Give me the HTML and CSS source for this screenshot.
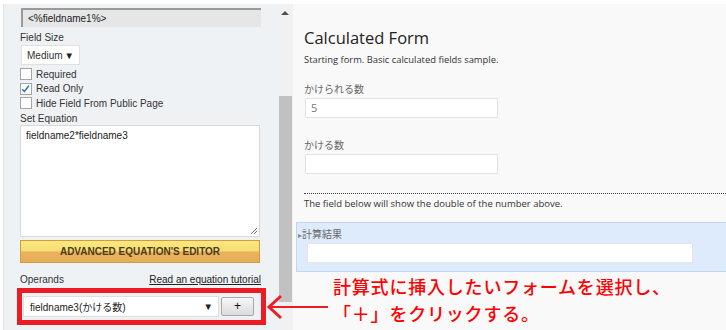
FILE: index.html
```html
<!DOCTYPE html>
<html lang="ja">
<head>
  <meta charset="UTF-8">
  <title>Calculated Form</title>
  <link rel="stylesheet" href="styles.css">
</head>
<body>
  <div class="page">
    <div class="sidebar">
      <div class="default-value">&lt;%fieldname1%&gt;</div>

      <div class="label">Field Size</div>
      <div class="size-select"><span>Medium</span><span class="caret">&#9660;</span></div>

      <div class="checks">
        <div class="check"><span class="box"></span>Required</div>
        <div class="check">
          <span class="box">
            <svg width="12" height="12" viewBox="0 0 12 12"><path d="M2.5 6.2 L4.8 8.8 L9.8 2.2" fill="none" stroke="#2b7cc4" stroke-width="1.6"/></svg>
          </span>Read Only
        </div>
        <div class="check"><span class="box"></span>Hide Field From Public Page</div>
      </div>

      <div class="label eq-label">Set Equation</div>
      <div class="equation">
        fieldname2*fieldname3
        <svg class="grip" width="8" height="8" viewBox="0 0 8 8"><path d="M7 1 L1 7 M7 4 L4 7" stroke="#777" stroke-width="1"/></svg>
      </div>

      <div class="btn-editor">ADVANCED EQUATION'S EDITOR</div>

      <div class="operands">
        <span>Operands</span>
        <a href="#" class="tutorial">Read an equation tutorial</a>
      </div>

      <div class="highlight">
        <div class="operand-select"><span>fieldname3(かける数)</span><span class="caret">&#9660;</span></div>
        <div class="btn-plus">+</div>
      </div>
    </div>

    <div class="scrollbar">
      <div class="scroll-up"></div>
      <div class="scroll-thumb"></div>
    </div>

    <div class="main">
      <h1 class="form-title">Calculated Form</h1>
      <p class="form-desc">Starting form. Basic calculated fields sample.</p>

      <div class="field">
        <div class="field-label">かけられる数</div>
        <div class="field-input">5</div>
      </div>

      <div class="field">
        <div class="field-label">かける数</div>
        <div class="field-input"></div>
      </div>

      <div class="separator"></div>
      <p class="note">The field below will show the double of the number above.</p>

      <div class="result-box">
        <div class="result-label"><span class="tri">&#9656;</span>計算結果</div>
        <div class="result-input"></div>
      </div>
    </div>

    <svg class="arrow" width="64" height="26" viewBox="0 0 64 26">
      <path d="M2 13 L62 13" stroke="#ee1c24" stroke-width="2.2"/>
      <path d="M15 2 L3 13 L15 24" fill="none" stroke="#ee1c24" stroke-width="3"/>
    </svg>
    <div class="annotation">計算式に挿入したいフォームを選択し、<br>「＋」をクリックする。</div>
  </div>
</body>
</html>
```

FILE: styles.css
```css
body {
  margin: 0;
  background-color: #fff;
  font-family: "Liberation Sans", Arial, sans-serif;
}

.page {
  position: relative;
  display: flex;
  width: 726px;
  height: 326px;
  padding-top: 4px;
  overflow: hidden;
}

/* left settings panel */
.sidebar {
  width: 241px;
  margin-left: 3px;
  padding: 4px 16px 0 16px;
  border-left: 1px solid #dfe4ea;
  background-color: #eff2f5;
  font-size: 10px;
  color: #333;
}

.default-value {
  box-sizing: border-box;
  width: 240px;
  height: 19px;
  margin-left: 1px;
  padding: 3px 5px 0;
  background-color: #e6e6e6;
  border-top: 2px solid #9a9a9a;
  border-left: 2px solid #9a9a9a;
  color: #222;
}

.label {
  margin-top: 4px;
  line-height: 13px;
  height: 13px;
}

.size-select {
  box-sizing: border-box;
  display: flex;
  justify-content: space-between;
  align-items: center;
  width: 59px;
  height: 20px;
  margin: 1px 0 0 1px;
  padding: 0 5px 0 5px;
  background-color: #fff;
  border: 1px solid #e0e0e0;
  font-size: 10px;
  white-space: nowrap;
}

.caret {
  font-size: 9.5px;
  color: #222;
}

.checks {
  margin-top: 2px;
}

.check {
  display: flex;
  align-items: center;
  height: 14.5px;
}

.box {
  box-sizing: border-box;
  width: 12px;
  height: 12px;
  margin-right: 4px;
  background-color: #fff;
  border: 1px solid #a5a5a5;
  display: flex;
}

.box svg {
  margin: -1px 0 0 -1px;
}

.eq-label {
  margin-top: 1px;
}

.equation {
  position: relative;
  box-sizing: border-box;
  width: 240px;
  height: 112px;
  margin-top: 0;
  padding: 4px 5px;
  background-color: #fff;
  border: 1px solid #d9d9d9;
  color: #222;
}

.grip {
  position: absolute;
  right: 1px;
  bottom: 1px;
}

.btn-editor {
  box-sizing: border-box;
  width: 240px;
  height: 23px;
  margin-top: 3px;
  padding-top: 5px;
  border: 1px solid #d49a42;
  background: linear-gradient(to bottom, #fbe97e 0%, #f6dc74 48%, #e8b25c 52%, #e6ae58 100%);
  text-align: center;
  font-weight: bold;
  color: #4b3a1c;
}

.operands {
  display: flex;
  justify-content: space-between;
  margin-top: 10px;
  line-height: 13px;
}

.tutorial {
  color: #222;
  text-decoration: underline;
}

.highlight {
  display: flex;
  align-items: center;
  width: 238px;
  height: 27px;
  margin: 2px 0 0 -3px;
  padding: 0 0 0 1px;
  border: 5px solid #ed1c24;
}

.operand-select {
  box-sizing: border-box;
  display: flex;
  justify-content: space-between;
  align-items: center;
  width: 196px;
  height: 21px;
  padding: 0 5px 0 6px;
  background-color: #fff;
  border: 1px solid #dedede;
  font-family: "Liberation Sans", "Noto Sans CJK JP", sans-serif;
  color: #222;
}

.btn-plus {
  box-sizing: border-box;
  width: 33px;
  height: 19px;
  margin-left: 2px;
  border: 1px solid #a9a9a9;
  border-radius: 2px;
  background: linear-gradient(to bottom, #f6f6f6, #dcdcdc);
  text-align: center;
  line-height: 16px;
  font-size: 12px;
  color: #111;
}

/* fake scrollbar */
.scrollbar {
  width: 16px;
  background-color: #f1f1f1;
}

.scroll-up {
  width: 0;
  height: 0;
  margin: 7px auto 0;
  border-left: 4px solid transparent;
  border-right: 4px solid transparent;
  border-bottom: 4px solid #505050;
}

.scroll-thumb {
  width: 13px;
  height: 206px;
  margin: 81px 0 0 2px;
  background-color: #c1c1c1;
}

/* form preview */
.main {
  flex: 1;
  padding: 0 0 0 11px;
  background-color: #f9f9f9;
  font-family: "Open Sans", "Noto Sans CJK JP", sans-serif;
  color: #333;
}

.form-title {
  margin: 23px 0 0;
  font-size: 16.5px;
  font-weight: 400;
  line-height: 22px;
  color: #222;
}

.form-desc {
  margin: 4px 0 0;
  font-size: 9.4px;
  line-height: 14px;
  color: #333;
}

.field {
  margin-top: 15px;
}

.field + .field {
  margin-top: 20px;
}

.field-label {
  font-family: "Noto Sans CJK JP", sans-serif;
  font-size: 10px;
  line-height: 14px;
  color: #666;
}

.field-input {
  box-sizing: border-box;
  width: 193px;
  height: 20px;
  margin: 2px 0 0 1px;
  padding: 1px 5px;
  background-color: #fff;
  border: 1px solid #e2e2e2;
  font-size: 11px;
  color: #777;
}

.separator {
  margin-top: 19px;
  border-top: 1px dotted #444;
}

.note {
  margin: 3px 0 0;
  font-size: 9.5px;
  line-height: 14px;
  color: #333;
}

.result-box {
  box-sizing: border-box;
  height: 50px;
  margin: 11px 0 0 -8px;
  padding: 5px 0 0 1px;
  background-color: #ddebfc;
  border: 1px solid #c3d6ef;
  border-right: none;
}

.result-label {
  font-family: "Noto Sans CJK JP", sans-serif;
  font-size: 10px;
  line-height: 11px;
  color: #666;
}

.tri {
  font-size: 8px;
  color: #888;
}

.result-input {
  box-sizing: border-box;
  width: 386px;
  height: 20px;
  margin: 3px 0 0 9px;
  background-color: #fff;
  border: 1px solid #e5e5e5;
}

/* red annotation over the screenshot */
.arrow {
  position: absolute;
  left: 266px;
  top: 294px;
}

.annotation {
  position: absolute;
  left: 333px;
  top: 273px;
  font-family: "Noto Sans CJK JP", sans-serif;
  font-size: 18px;
  font-weight: 500;
  letter-spacing: 0.8px;
  line-height: 27px;
  color: #ff0000;
}
```
